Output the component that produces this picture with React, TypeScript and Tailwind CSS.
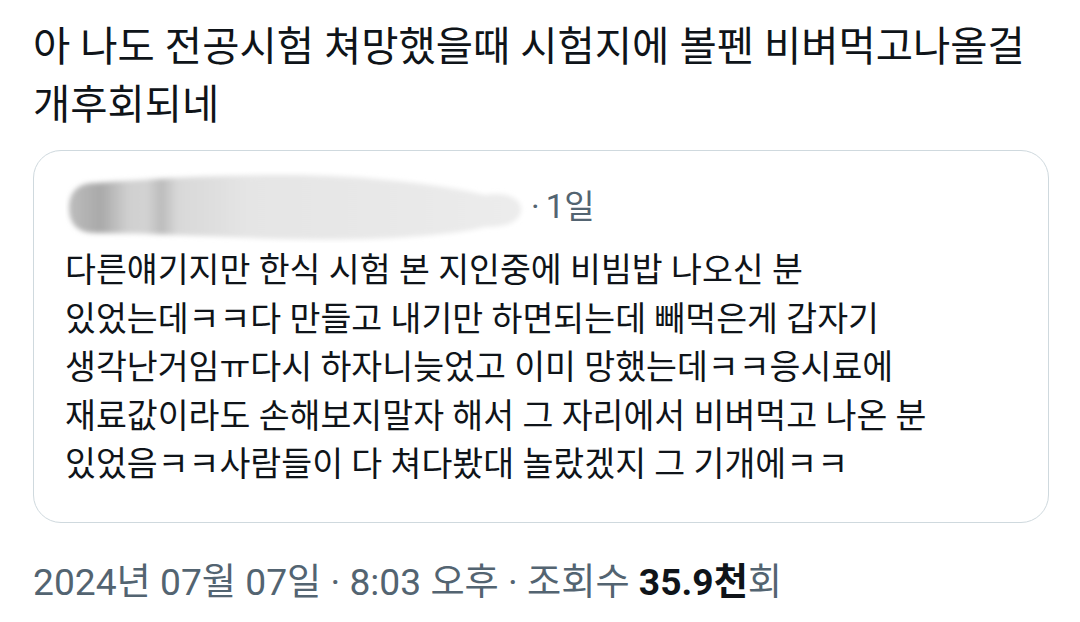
import React from "react";

function Smear() {
  return (
    <svg width="462" height="72" viewBox="0 0 462 72" className="shrink-0">
      <defs>
        <linearGradient id="smearGrad" x1="0" y1="0" x2="1" y2="0">
          <stop offset="0" stopColor="#bdbdbd" />
          <stop offset="0.07" stopColor="#a9a9a9" />
          <stop offset="0.13" stopColor="#cfcfcf" />
          <stop offset="0.17" stopColor="#d3d3d3" />
          <stop offset="0.205" stopColor="#bcbcbc" />
          <stop offset="0.24" stopColor="#d8d8d8" />
          <stop offset="0.4" stopColor="#e5e5e5" />
          <stop offset="0.7" stopColor="#e8e8e8" />
          <stop offset="1" stopColor="#ececec" />
        </linearGradient>
        <filter id="smearBlur" x="-5%" y="-20%" width="110%" height="140%">
          <feGaussianBlur stdDeviation="2.5" />
        </filter>
      </defs>
      <path
        d="M30 12 C90 8 150 4 220 4 C300 4 380 14 420 24 C445 20 458 30 456 40 C454 52 440 56 420 56 C380 66 300 70 220 68 C150 66 90 62 30 62 C10 62 4 50 4 37 C4 22 12 12 30 12 Z"
        fill="url(#smearGrad)"
        filter="url(#smearBlur)"
      />
    </svg>
  );
}

export default function App() {
  return (
    <div
      className="w-[1080px] h-[622px] bg-white overflow-hidden text-[#0f1419]"
      style={{ fontFamily: 'Roboto, "Noto Sans CJK KR", "Noto Sans", sans-serif' }}
    >
      <div className="flex flex-col pl-[33px] pr-[20px] pt-[18px]">
        <p className="text-[40.5px] leading-[58px] whitespace-nowrap">
          아 나도 전공시험 쳐망했을때 시험지에 볼펜 비벼먹고나올걸
          <br />
          개후회되네
        </p>
        <div className="mt-[16px] w-[1016px] h-[373px] flex flex-col border border-[#cfd9de] rounded-[28px] pl-[31px] pt-[20px]">
          <div className="flex items-center h-[72px]">
            <Smear />
            <span className="flex items-center gap-[6px] text-[33px] text-[#536471] ml-[4px]">
              <span>·</span>
              <span>1일</span>
            </span>
          </div>
          <p className="text-[33.6px] leading-[48.5px] mt-[4px] whitespace-nowrap">
            다른얘기지만 한식 시험 본 지인중에 비빔밥 나오신 분
            <br />
            있었는데ㅋㅋ다 만들고 내기만 하면되는데 빼먹은게 갑자기
            <br />
            생각난거임ㅠ다시 하자니늦었고 이미 망했는데ㅋㅋ응시료에
            <br />
            재료값이라도 손해보지말자 해서 그 자리에서 비벼먹고 나온 분
            <br />
            있었음ㅋㅋ사람들이 다 쳐다봤대 놀랐겠지 그 기개에ㅋㅋ
          </p>
        </div>
        <p className="mt-[32px] text-[37.2px] text-[#536471] whitespace-nowrap">
          2024년 07월 07일 · 8:03 오후 · 조회수{" "}
          <span className="font-bold text-[#0f1419]">35.9천</span>회
        </p>
      </div>
    </div>
  );
}
